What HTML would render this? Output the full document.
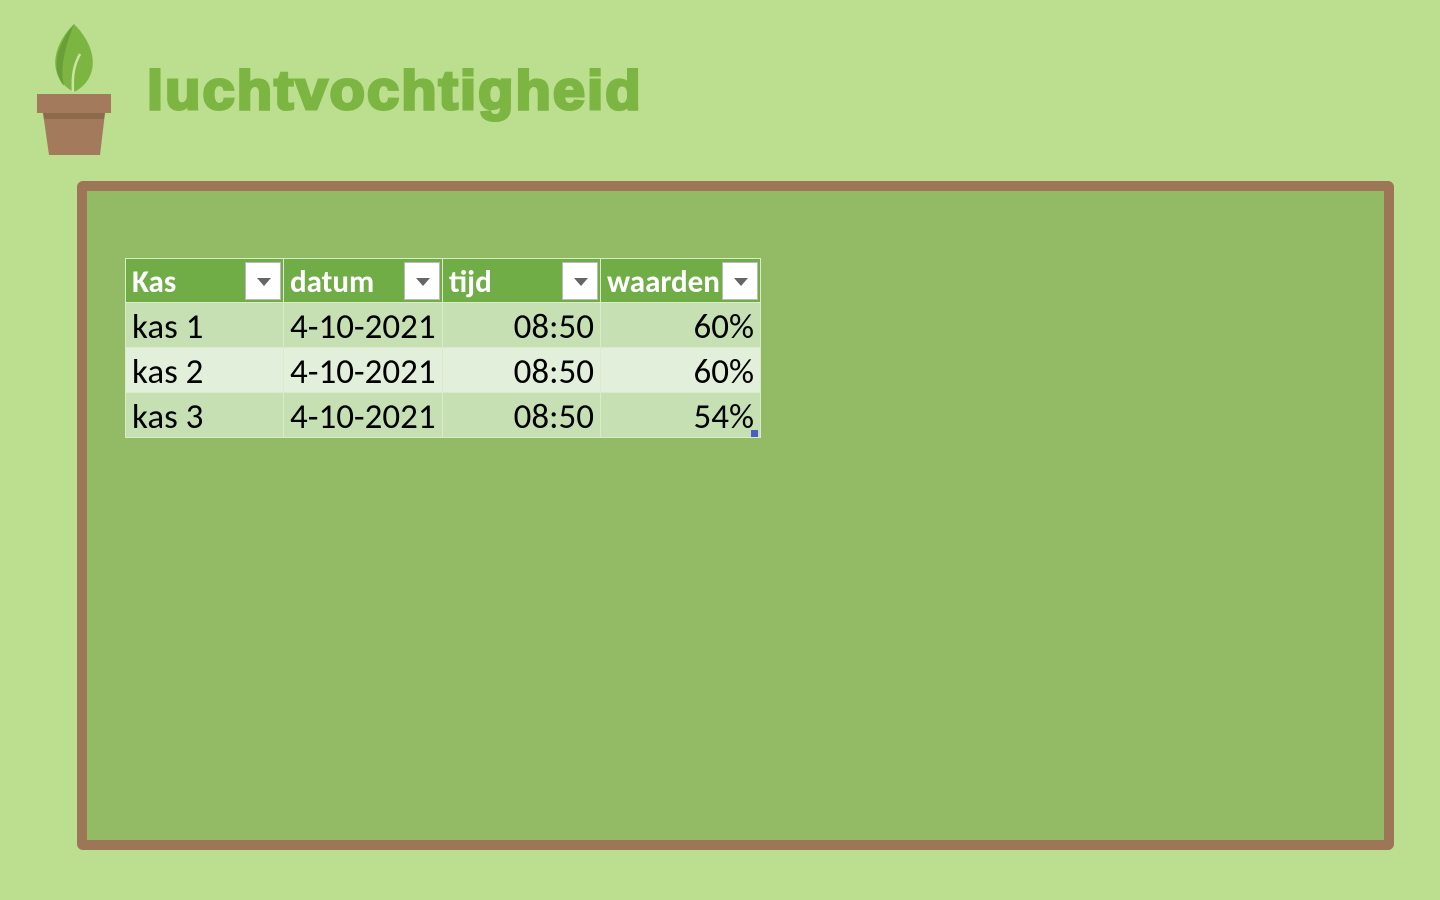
<!DOCTYPE html>
<html><head><meta charset="utf-8"><style>
html,body{margin:0;padding:0}
body{width:1440px;height:900px;background:#bbde8f;position:relative;overflow:hidden;font-family:"Liberation Sans",sans-serif}
.title{position:absolute;left:147px;top:58px;font-size:55px;font-weight:bold;color:#7db543;letter-spacing:2px;transform:scaleX(1.05);transform-origin:left;-webkit-text-stroke:3px #7db543}
.frame{position:absolute;left:77px;top:181px;width:1297px;height:649px;border:10px solid #9c7656;border-radius:6px;background:#93bb65}
table{position:absolute;left:125px;top:258px;border-collapse:collapse;font-family:Carlito,Calibri,"Liberation Sans",sans-serif;font-size:35px;table-layout:fixed}
td{padding:4px 6px 0;height:45px;line-height:40px;border:1px solid #d9ebc9;box-sizing:border-box;white-space:nowrap;overflow:hidden}
tr.h td{background:#70ad47;color:#fff;font-weight:bold;font-size:31px;height:44px;position:relative;padding-top:3px}
tr.a td{background:#c6e0b4;color:#000}
tr.b td{background:#e2efda;color:#000}
.r{text-align:right}
.dd{position:absolute;right:2px;top:3px;width:36px;height:38px;background:#fff;border:1px solid #bbb;box-sizing:border-box;z-index:2}
.dd:after{content:"";position:absolute;left:11px;top:15px;border-left:7px solid transparent;border-right:7px solid transparent;border-top:8px solid #666}
</style></head><body>
<svg style="position:absolute;left:30px;top:20px" width="90" height="140" viewBox="0 0 90 140">
<path d="M44 72 C20 60 18 30 44 4 C70 30 68 60 44 72Z" fill="#7db543"/>
<path d="M44 4 C24 28 22 52 34 66 C30 48 34 30 44 4Z" fill="#6a9e38"/>
<path d="M43 72 C42 55 44 45 50 34" stroke="#c8e6a0" stroke-width="2.5" fill="none"/>
<path d="M7 74 H81 V93 H7Z" fill="#a37b5c"/>
<path d="M13 93 H75 L70 135 H19Z" fill="#a37b5c"/>
<path d="M13 93 H75 L74 99 H14Z" fill="#8e6a4d"/>
</svg>
<div class="title">luchtvochtigheid</div>
<div class="frame"></div>
<table>
<colgroup><col style="width:158px"><col style="width:159px"><col style="width:158px"><col style="width:160px"></colgroup>
<tr class="h"><td>Kas<span class="dd"></span></td><td>datum<span class="dd"></span></td><td>tijd<span class="dd"></span></td><td>waarden<span class="dd"></span></td></tr>
<tr class="a"><td>kas 1</td><td>4-10-2021</td><td class="r">08:50</td><td class="r">60%</td></tr>
<tr class="b"><td>kas 2</td><td>4-10-2021</td><td class="r">08:50</td><td class="r">60%</td></tr>
<tr class="a"><td>kas 3</td><td>4-10-2021</td><td class="r">08:50</td><td class="r">54%</td></tr>
</table>
<div style="position:absolute;left:751px;top:430px;width:7px;height:7px;background:#4a5fbf"></div>
</body></html>
